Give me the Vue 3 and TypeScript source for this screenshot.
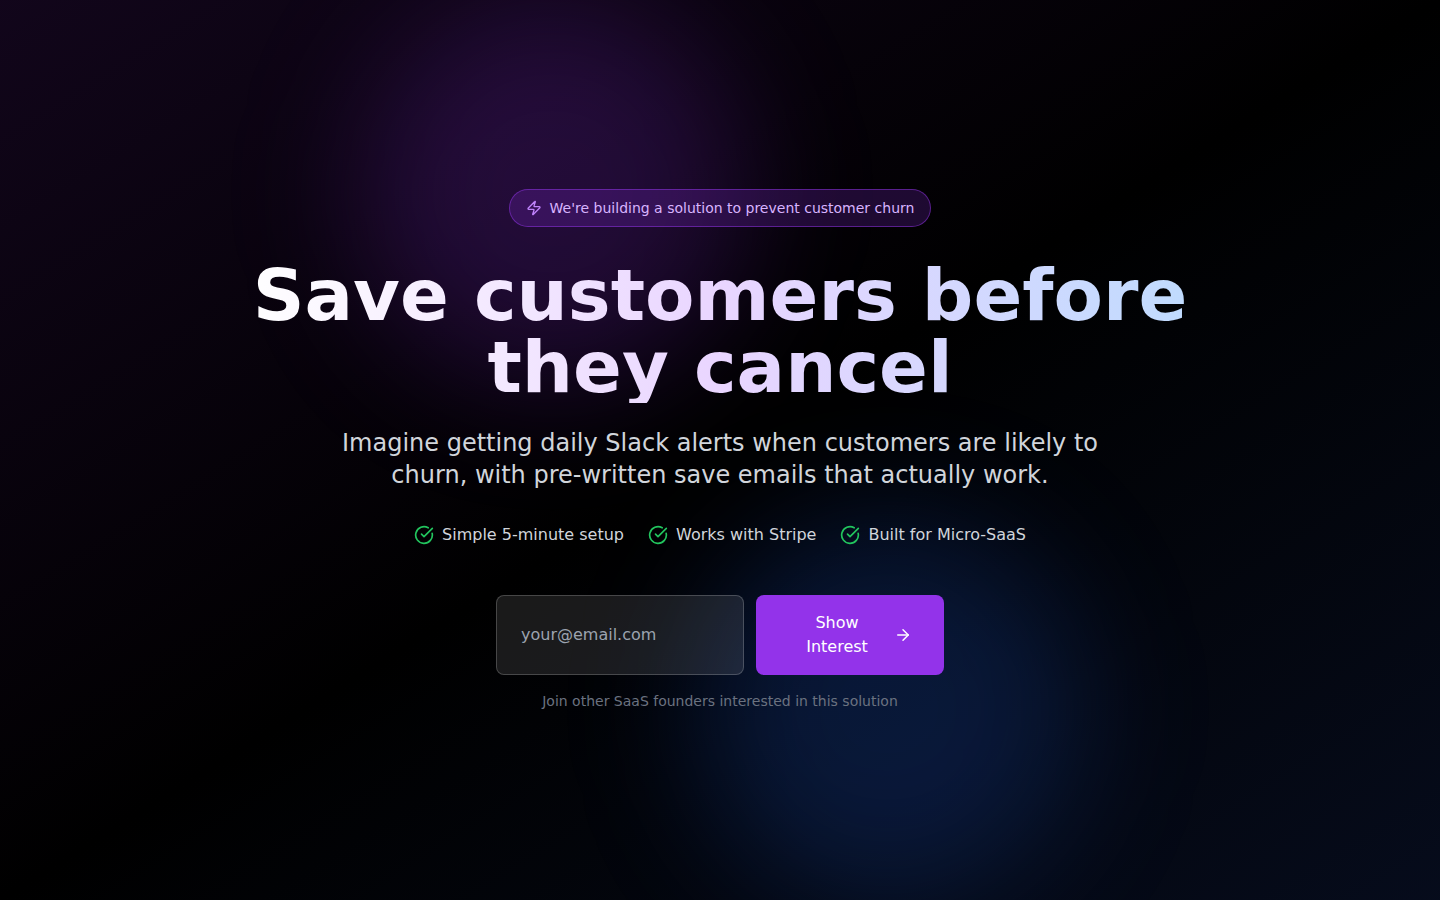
<script setup lang="ts">
import { ref } from 'vue'

const email = ref<string>('')
const benefits: string[] = ['Simple 5-minute setup', 'Works with Stripe', 'Built for Micro-SaaS']
</script>

<template>
  <main class="page">
    <section class="hero">
      <div class="wash"></div>
      <div class="glow glow-purple"></div>
      <div class="glow glow-blue"></div>

      <div class="content">
        <div class="pill">
          <svg class="icon-bolt" viewBox="0 0 24 24" aria-hidden="true">
            <path d="M4 14a1 1 0 0 1-.78-1.63l9.9-10.2a.5.5 0 0 1 .86.46l-1.92 6.02A1 1 0 0 0 13 10h7a1 1 0 0 1 .78 1.63l-9.9 10.2a.5.5 0 0 1-.86-.46l1.92-6.02A1 1 0 0 0 11 14z" />
          </svg>
          <span>We're building a solution to prevent customer churn</span>
        </div>

        <h1>Save customers before they cancel</h1>

        <p class="lead">
          Imagine getting daily Slack alerts when customers are likely to churn, with pre-written save
          emails that actually work.
        </p>

        <ul class="benefits">
          <li v-for="benefit in benefits" :key="benefit">
            <svg class="icon-check" viewBox="0 0 24 24" aria-hidden="true">
              <path d="M21.801 10A10 10 0 1 1 17 3.335" />
              <path d="m9 11 3 3L22 4" />
            </svg>
            <span>{{ benefit }}</span>
          </li>
        </ul>

        <form class="signup" @submit.prevent>
          <input v-model="email" type="email" placeholder="your@email.com" aria-label="Email address" required />
          <button type="submit">
            <span>Show Interest</span>
            <svg class="icon-arrow" viewBox="0 0 24 24" aria-hidden="true">
              <path d="M5 12h14" />
              <path d="m12 5 7 7-7 7" />
            </svg>
          </button>
        </form>
        <p class="note">Join other SaaS founders interested in this solution</p>
      </div>
    </section>
  </main>
</template>

<style>
body {
  margin: 0;
  background: #000;
}
</style>

<style scoped>
*,
*::before,
*::after {
  box-sizing: border-box;
}

.page {
  min-height: 100vh;
  background: #000;
  color: #fff;
  font-family: "DejaVu Sans", sans-serif;
  font-size: 16px;
  line-height: 24px;
}

.hero {
  position: relative;
  display: flex;
  align-items: center;
  justify-content: center;
  min-height: 100vh;
  overflow: hidden;
}

.wash {
  position: absolute;
  inset: 0;
  background: linear-gradient(to bottom right, rgba(88, 28, 135, 0.2), #000, rgba(30, 58, 138, 0.2));
}

.glow {
  position: absolute;
  width: 384px;
  height: 384px;
  border-radius: 50%;
  filter: blur(64px);
}

.glow-purple {
  top: 0;
  left: 25%;
  background: rgba(147, 51, 234, 0.2);
}

.glow-blue {
  right: 25%;
  bottom: 0;
  background: rgba(37, 99, 235, 0.2);
}

.content {
  position: relative;
  display: flex;
  flex-direction: column;
  align-items: center;
  width: 100%;
  max-width: 1024px;
  padding: 0 32px;
  text-align: center;
}

.pill {
  display: flex;
  align-items: center;
  gap: 8px;
  margin-bottom: 32px;
  padding: 8px 16px;
  border: 1px solid rgba(147, 51, 234, 0.5);
  border-radius: 20px;
  background: rgba(147, 51, 234, 0.2);
  color: #d8b4fe;
  font-size: 14px;
  line-height: 20px;
}

svg {
  flex-shrink: 0;
  fill: none;
  stroke: currentColor;
  stroke-width: 2;
  stroke-linecap: round;
  stroke-linejoin: round;
}

.icon-bolt {
  width: 16px;
  height: 16px;
  color: #c084fc;
}

.icon-check {
  width: 20px;
  height: 20px;
  color: #22c55e;
}

.icon-arrow {
  width: 18px;
  height: 20px;
}

h1 {
  margin: 0 0 24px;
  background: linear-gradient(to right, #fff, #e9d5ff, #bfdbfe);
  background-clip: text;
  color: transparent;
  font-size: 72px;
  font-weight: 700;
  line-height: 72px;
}

.lead {
  max-width: 768px;
  margin: 0 0 32px;
  color: #d1d5db;
  font-size: 24px;
  line-height: 32px;
}

.benefits {
  display: flex;
  flex-wrap: wrap;
  justify-content: center;
  gap: 24px;
  margin: 0 0 48px;
  padding: 0;
  color: #d1d5db;
  list-style: none;
}

.benefits li {
  display: flex;
  align-items: center;
  gap: 8px;
}

.signup {
  display: flex;
  gap: 12px;
  width: 100%;
  max-width: 448px;
}

input {
  flex: 1;
  min-width: 0;
  padding: 16px 24px;
  border: 1px solid rgba(255, 255, 255, 0.2);
  border-radius: 8px;
  background: rgba(255, 255, 255, 0.1);
  color: #fff;
  font: inherit;
}

input::placeholder {
  color: #9ca3af;
  opacity: 1;
}

button {
  display: flex;
  align-items: center;
  justify-content: center;
  gap: 8px;
  width: 188px;
  padding: 16px 32px;
  border: 0;
  border-radius: 8px;
  background: #9333ea;
  color: #fff;
  font: inherit;
  cursor: pointer;
}

.note {
  margin: 16px 0 0;
  color: #6b7280;
  font-size: 14px;
  line-height: 20px;
}
</style>
